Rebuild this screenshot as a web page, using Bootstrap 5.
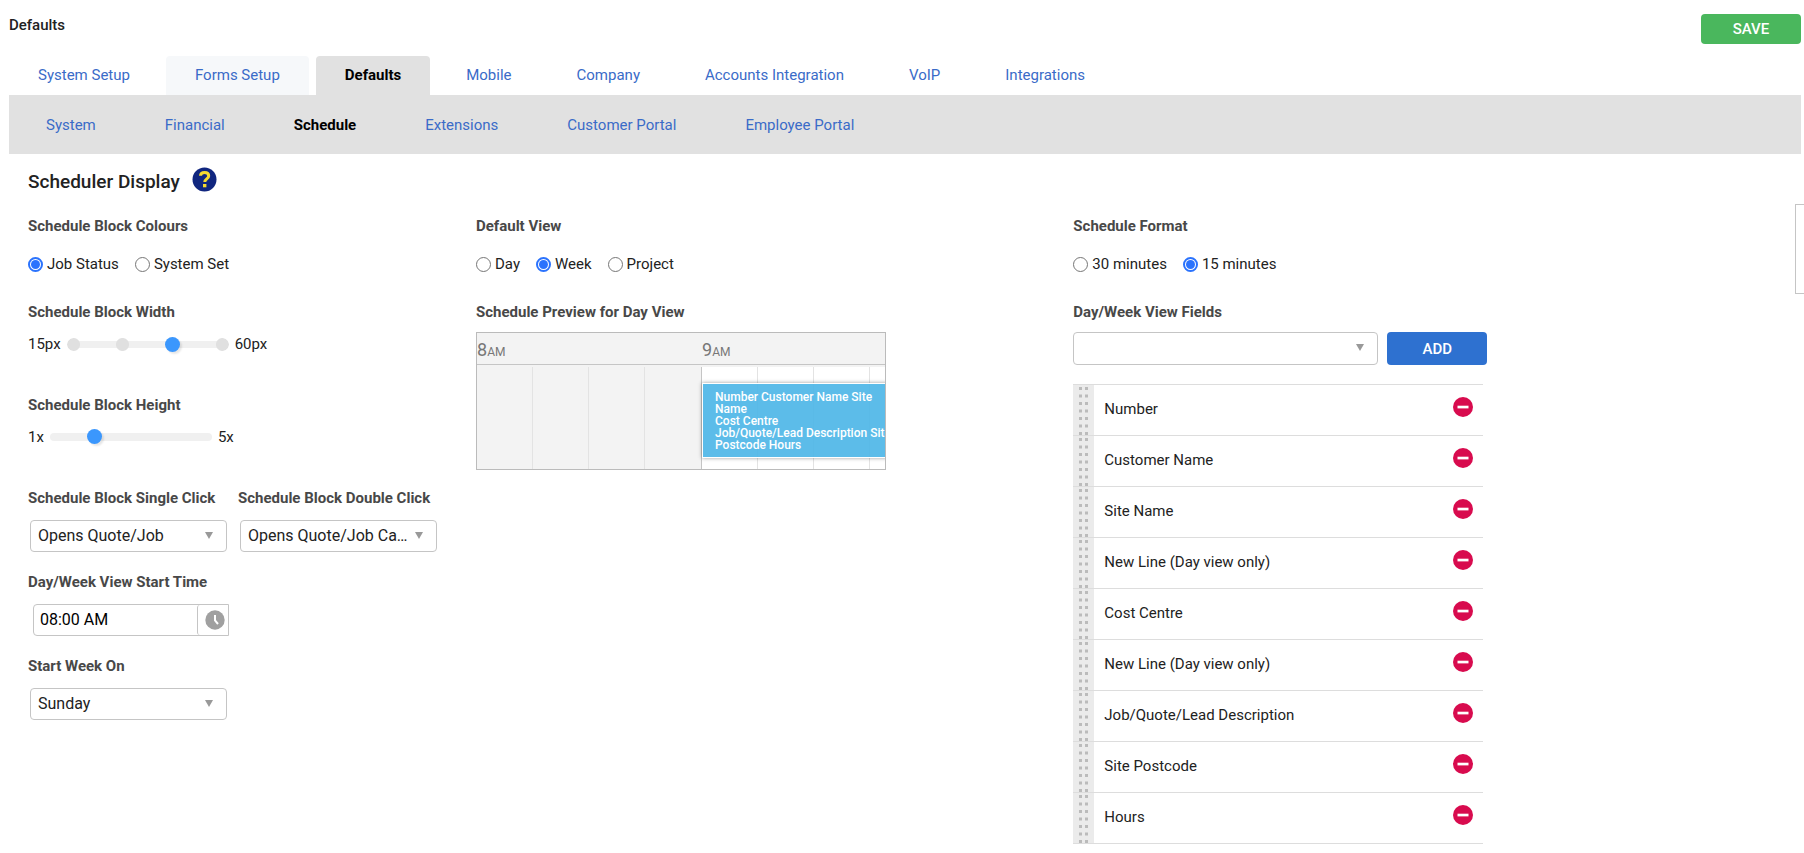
<!DOCTYPE html>
<html lang="en">
<head>
<meta charset="utf-8">
<meta name="viewport" content="width=device-width, initial-scale=1">
<title>Defaults</title>
<link href="https://cdn.jsdelivr.net/npm/bootstrap@5.3.0/dist/css/bootstrap.min.css" rel="stylesheet">
<style>
body{font-family:Roboto,"Liberation Sans",sans-serif;font-size:15px;line-height:20px;color:#222;background:#fff;overflow-x:hidden}
.page{padding:14px 3px 0 9px}
.page-title{font-size:15px;line-height:20px;font-weight:500;margin:0;padding-top:1px}
.btn-act{width:100px;border:0;border-radius:4px;color:#fff;font-weight:500;font-size:15px;line-height:20px;padding:0}
.btn-save{height:30px;background:#4ab75d}
.btn-add{height:33px;background:#2e71d0}
.btn-act:hover{color:#fff;background:#3b8f4b}
.main-tabs{gap:7px;margin-top:12px}
.main-tabs .nav-link{padding:9px 29px 10px;border-radius:4px 4px 0 0;color:#3a6bc8}
.main-tabs .nav-link.hovered{background:#f6f8fa}
.main-tabs .nav-link.active{background:#e1e1e1;color:#000;font-weight:700}
.sub-tabs{background:#e1e1e1;padding:20px 37px 19px;gap:69px}
.sub-tabs .nav-link{padding:0;color:#3a6bc8}
.sub-tabs .nav-link.active{color:#000;font-weight:700}
.section-head{padding:13px 0 0 19px;gap:12px;height:62px}
.section-head h2{font-size:19px;line-height:30px;font-weight:500;margin:0}
.pane{padding-left:19px}
.cap{display:block;font-size:15px;line-height:20px;font-weight:700;color:#484848;margin:0 0 12px;padding:0;white-space:nowrap;float:none}
.cap-radio{margin-bottom:18px}
.cap-tight{margin-bottom:10px}
.after-radio{margin-bottom:28px}
.after-slider{margin-bottom:41px}
.after-box{margin-bottom:20px}
.choices{gap:16px}
.choice{display:flex;align-items:center;gap:4px;margin:0}
.choice input{appearance:none;width:15px;height:15px;margin:0;border:1px solid #767676;border-radius:50%;background:#fff;flex:none}
.choice input:checked{border:2px solid #2b73fd;background:#2b73fd;background-clip:content-box;padding:1px}
.slider-row{gap:6px}
.slide{appearance:none;width:162px;height:20px;margin:0;background:transparent;display:block}
.slide::-webkit-slider-runnable-track{height:8px;border-radius:4px;background:#f0f0f0}
.slide::-webkit-slider-thumb{appearance:none;width:15px;height:15px;margin-top:-4px;border-radius:50%;background:#3b97fd;box-shadow:2px 2px 2px rgba(0,0,0,.1)}
.slide.stepped::-webkit-slider-runnable-track{height:13px;border-radius:7px;background:radial-gradient(circle,#e0e0e0 6px,transparent 7px) 0 0/13px 13px no-repeat,radial-gradient(circle,#e0e0e0 6px,transparent 7px) 33% 0/13px 13px no-repeat,radial-gradient(circle,#e0e0e0 6px,transparent 7px) 100% 0/13px 13px no-repeat,linear-gradient(#f0f0f0,#f0f0f0) 6px 3px/148px 7px no-repeat}
.slide.stepped::-webkit-slider-thumb{margin-top:-1px}
.pick{appearance:none;height:32px;border:1px solid #c5c5c5;border-radius:4px;font-size:16px;line-height:20px;color:#222;padding:0 26px 1px 7px;text-overflow:ellipsis;background:#fff url("data:image/svg+xml,%3Csvg xmlns='http://www.w3.org/2000/svg' width='8' height='7'%3E%3Cpath d='M0 0h8L4 7z' fill='%23999'/%3E%3C/svg%3E") right 13px top 11px no-repeat}
.pick-sm{width:197px;margin-left:2px}
.clicks{gap:11px}
.adder{gap:9px}
.pick-field{height:33px;width:305px}
.time-box{width:196px;height:32px;margin-left:5px;border:1px solid #c5c5c5;border-radius:4px 0 0 4px}
.time-box input{flex:1;min-width:0;border:0;padding:0 6px;font-size:16px;color:#000;background:transparent}
.time-box button{width:31px;border:0;border-left:1px solid #c5c5c5;border-radius:3px 0 0 3px;background:#fff;padding:0 3px 1px 0;display:flex;align-items:center;justify-content:flex-end}
.preview{width:410px;max-width:100%;height:138px;border:1px solid #bbb;background:#f3f3f3;overflow:hidden;position:relative}
.hours{display:grid;grid-template-columns:225px 1fr;height:32px;border-bottom:1px solid #c5c5c5;font-size:18px;line-height:33px;color:#777}
.hours small{font-size:12px}
.slots{display:grid;grid-template-columns:repeat(3,56px) 57px repeat(3,56px) 1fr;height:102px;margin-top:2px}
.slots i{border-right:1px solid #e3e3e3}
.slots i:nth-child(4){border-color:#c5c5c5}
.slots i:nth-child(n+5){background:#fff}
.slots i:last-child{border:0}
.job{position:absolute;left:225px;top:50px;width:220px;height:75px;border:1px solid #fff;background:rgba(80,183,231,.93);box-shadow:0 0 4px rgba(0,0,0,.4);color:#fff;font-size:12px;line-height:12px;font-weight:500;padding:7px 12px;white-space:nowrap}
.field-list{width:410px;max-width:100%;margin:19px 0 0;padding:0;border-top:1px solid #ddd}
.field-list li{display:flex;height:51px;border-bottom:1px solid #ddd;padding-right:10px}
.grip{width:21px;margin-right:10px;background:#ebebeb url("data:image/svg+xml,%3Csvg xmlns='http://www.w3.org/2000/svg' width='21' height='15'%3E%3Cpath d='M6 2h3v3H6zM12 2h3v3h-3zM6 9.5h3v3H6zM12 9.5h3v3h-3z' fill='%23bbb'/%3E%3C/svg%3E")}
.field-list span{flex:1;padding-top:14px}
.del{border:0;background:none;padding:0;width:20px;height:20px;margin-top:12px}
.del svg,.help svg,.time-box svg{display:block}
.side-tab{position:absolute;top:204px;right:0;width:9px;height:90px;border:1px solid #c5c5c5;border-right:0;background:#fff}
</style>
</head>
<body>
<svg width="0" height="0" class="position-absolute" aria-hidden="true"><symbol id="minus" viewBox="0 0 20 20"><circle cx="10" cy="10" r="10" fill="#d80b4e"/><path d="M4.500 8.700h11v2.700h-11z" fill="#fff"/></symbol></svg>
<div class="page">
  <header class="d-flex justify-content-between align-items-start">
    <h1 class="page-title">Defaults</h1>
    <button type="button" class="btn btn-act btn-save">SAVE</button>
  </header>
  <nav class="nav main-tabs" aria-label="Setup">
    <a class="nav-link" href="#">System Setup</a>
    <a class="nav-link hovered" href="#">Forms Setup</a>
    <a class="nav-link active" href="#">Defaults</a>
    <a class="nav-link" href="#">Mobile</a>
    <a class="nav-link" href="#">Company</a>
    <a class="nav-link" href="#">Accounts Integration</a>
    <a class="nav-link" href="#">VoIP</a>
    <a class="nav-link" href="#">Integrations</a>
  </nav>
  <nav class="nav sub-tabs" aria-label="Defaults">
    <a class="nav-link" href="#">System</a>
    <a class="nav-link" href="#">Financial</a>
    <a class="nav-link active" href="#">Schedule</a>
    <a class="nav-link" href="#">Extensions</a>
    <a class="nav-link" href="#">Customer Portal</a>
    <a class="nav-link" href="#">Employee Portal</a>
  </nav>
  <main>
    <div class="section-head d-flex align-items-start">
      <h2>Scheduler Display</h2>
      <a href="#" class="help" aria-label="Help"><svg width="25" height="25" viewBox="0 0 25 25"><circle cx="12.500" cy="12.500" r="12" fill="#10267f"/><path d="M8.500 8.800C8.600 6.400 10.200 5.500 12.600 5.500s4.100 1.200 4.100 3.400c0 3-3.900 3-3.900 6.100" fill="none" stroke="#f5d931" stroke-width="3"/><path d="M11 17h3.400v3.300H11z" fill="#f5d931"/></svg></a>
    </div>
    <div class="row g-0">
      <section class="col-3 pane">
        <fieldset class="after-radio">
          <legend class="cap cap-radio">Schedule Block Colours</legend>
          <div class="d-flex choices">
            <label class="choice"><input type="radio" name="colours" checked>Job Status</label>
            <label class="choice"><input type="radio" name="colours">System Set</label>
          </div>
        </fieldset>
        <div class="after-slider">
          <label class="cap" for="bw">Schedule Block Width</label>
          <div class="d-flex slider-row"><span>15px</span><input class="slide stepped" id="bw" type="range" min="0" max="3" value="2"><span>60px</span></div>
        </div>
        <div class="after-slider">
          <label class="cap" for="bh">Schedule Block Height</label>
          <div class="d-flex slider-row"><span>1x</span><input class="slide" id="bh" type="range" min="1" max="5" value="2"><span>5x</span></div>
        </div>
        <div class="d-flex clicks after-box">
          <div>
            <label class="cap" for="sc">Schedule Block Single Click</label>
            <select class="pick pick-sm" id="sc"><option>Opens Quote/Job</option></select>
          </div>
          <div>
            <label class="cap" for="dc">Schedule Block Double Click</label>
            <select class="pick pick-sm" id="dc"><option>Opens Quote/Job Card</option></select>
          </div>
        </div>
        <div class="after-box">
          <label class="cap" for="st">Day/Week View Start Time</label>
          <div class="time-box d-flex"><input id="st" type="text" value="08:00 AM"><button type="button" aria-label="Choose time"><svg width="20" height="20" viewBox="0 0 20 20"><circle cx="10" cy="10" r="9.700" fill="#a0a0a0"/><path d="M10 5v5.500l3 3.500" fill="none" stroke="#fff" stroke-width="2"/></svg></button></div>
        </div>
        <div>
          <label class="cap" for="sw">Start Week On</label>
          <select class="pick pick-sm" id="sw"><option>Sunday</option></select>
        </div>
      </section>
      <section class="col-4 pane">
        <fieldset class="after-radio">
          <legend class="cap cap-radio">Default View</legend>
          <div class="d-flex choices">
            <label class="choice"><input type="radio" name="view">Day</label>
            <label class="choice"><input type="radio" name="view" checked>Week</label>
            <label class="choice"><input type="radio" name="view">Project</label>
          </div>
        </fieldset>
        <h3 class="cap cap-tight">Schedule Preview for Day View</h3>
        <div class="preview">
          <div class="hours"><div>8<small>AM</small></div><div>9<small>AM</small></div></div>
          <div class="slots"><i></i><i></i><i></i><i></i><i></i><i></i><i></i><i></i></div>
          <div class="job">Number Customer Name Site<br>Name<br>Cost Centre<br>Job/Quote/Lead Description Site<br>Postcode Hours</div>
        </div>
      </section>
      <section class="col-5 pane">
        <fieldset class="after-radio">
          <legend class="cap cap-radio">Schedule Format</legend>
          <div class="d-flex choices">
            <label class="choice"><input type="radio" name="fmt">30 minutes</label>
            <label class="choice"><input type="radio" name="fmt" checked>15 minutes</label>
          </div>
        </fieldset>
        <label class="cap cap-tight" for="vf">Day/Week View Fields</label>
        <div class="d-flex adder">
          <select class="pick pick-field" id="vf"><option></option></select>
          <button type="button" class="btn btn-act btn-add">ADD</button>
        </div>
        <ul class="field-list list-unstyled">
          <li><div class="grip"></div><span>Number</span><button type="button" class="del" aria-label="Remove"><svg width="20" height="20"><use href="#minus"/></svg></button></li>
          <li><div class="grip"></div><span>Customer Name</span><button type="button" class="del" aria-label="Remove"><svg width="20" height="20"><use href="#minus"/></svg></button></li>
          <li><div class="grip"></div><span>Site Name</span><button type="button" class="del" aria-label="Remove"><svg width="20" height="20"><use href="#minus"/></svg></button></li>
          <li><div class="grip"></div><span>New Line (Day view only)</span><button type="button" class="del" aria-label="Remove"><svg width="20" height="20"><use href="#minus"/></svg></button></li>
          <li><div class="grip"></div><span>Cost Centre</span><button type="button" class="del" aria-label="Remove"><svg width="20" height="20"><use href="#minus"/></svg></button></li>
          <li><div class="grip"></div><span>New Line (Day view only)</span><button type="button" class="del" aria-label="Remove"><svg width="20" height="20"><use href="#minus"/></svg></button></li>
          <li><div class="grip"></div><span>Job/Quote/Lead Description</span><button type="button" class="del" aria-label="Remove"><svg width="20" height="20"><use href="#minus"/></svg></button></li>
          <li><div class="grip"></div><span>Site Postcode</span><button type="button" class="del" aria-label="Remove"><svg width="20" height="20"><use href="#minus"/></svg></button></li>
          <li><div class="grip"></div><span>Hours</span><button type="button" class="del" aria-label="Remove"><svg width="20" height="20"><use href="#minus"/></svg></button></li>
        </ul>
      </section>
    </div>
  </main>
</div>
<aside class="side-tab"></aside>
<script src="https://cdn.jsdelivr.net/npm/bootstrap@5.3.0/dist/js/bootstrap.bundle.min.js"></script>
</body>
</html>
